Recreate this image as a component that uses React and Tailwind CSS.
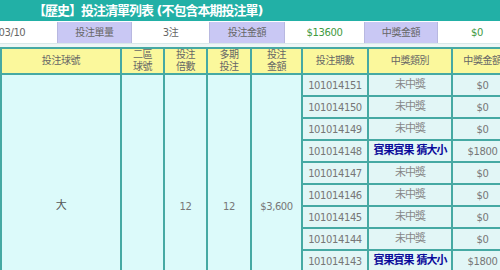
import React from 'react';

const font = { fontFamily: '"DejaVu Sans", "Noto Sans CJK TC", sans-serif' };

const periods = [
  '101014151', '101014150', '101014149', '101014148', '101014147', '101014146',
  '101014145', '101014144', '101014143', '101014142', '101014141', '101014140',
];
const wins = ['101014148', '101014143'];

const cols = [120, 43, 43, 44, 51, 66, 84, 61];

function App() {
  return (
    <div className="w-[500px] h-[270px] overflow-hidden bg-white" style={font}>
      {/* Title */}
      <div className="h-[21px] bg-[#22b0a6] flex items-center pl-[33px]">
        <span className="text-white font-bold text-[13px] tracking-[-1px] leading-none whitespace-nowrap">
          【歷史】投注清單列表 (不包含本期投注單)
        </span>
      </div>

      {/* Summary row */}
      <div className="mt-[1px] h-[22px] flex text-[10px] tracking-[-0.4px] whitespace-nowrap border-b border-[#d8e8e8]">
        <div className="-ml-[60px] w-[117px] shrink-0 bg-white flex items-center justify-center text-[#666]">2012/03/10</div>
        <div className="w-[75px] shrink-0 bg-[#c9c8f4] flex items-center justify-center text-[#666] border-x border-[#b8b8e0]">投注單量</div>
        <div className="w-[77px] shrink-0 bg-white flex items-center justify-center text-[#666]">3注</div>
        <div className="w-[76px] shrink-0 bg-[#c9c8f4] flex items-center justify-center text-[#666] border-x border-[#b8b8e0]">投注金額</div>
        <div className="w-[79px] shrink-0 bg-white flex items-center justify-center text-[#3f9a3f]">$13600</div>
        <div className="w-[74px] shrink-0 bg-[#c9c8f4] flex items-center justify-center text-[#666] border-x border-[#b8b8e0]">中獎金額</div>
        <div className="w-[78px] shrink-0 bg-white flex items-center justify-center text-[#3f9a3f]">$0</div>
      </div>

      <div className="h-[3px] bg-[#eef6f6]" />

      {/* Detail table */}
      <table className="table-fixed border-collapse w-[512px] text-[10px] tracking-[-0.4px]">
        <colgroup>
          {cols.map((w, i) => (
            <col key={i} style={{ width: w }} />
          ))}
        </colgroup>
        <thead>
          <tr className="h-[26px] bg-[#fbf89c] text-[#666] leading-[12px]">
            <th className="font-normal border-2 border-[#46a9a3]">投注球號</th>
            <th className="font-normal border-2 border-[#46a9a3]">二區<br />球號</th>
            <th className="font-normal border-2 border-[#46a9a3]">投注<br />倍數</th>
            <th className="font-normal border-2 border-[#46a9a3]">多期<br />投注</th>
            <th className="font-normal border-2 border-[#46a9a3]">投注<br />金額</th>
            <th className="font-normal border-2 border-[#46a9a3]">投注期數</th>
            <th className="font-normal border-2 border-[#46a9a3]">中獎類別</th>
            <th className="font-normal border-2 border-[#46a9a3] whitespace-nowrap">中獎金額</th>
          </tr>
        </thead>
        <tbody>
          {periods.map((p, i) => {
            const win = wins.includes(p);
            return (
              <tr key={p} className="h-[22px]">
                {i === 0 && (
                  <>
                    <td rowSpan={12} className="bg-[#dcfafa] border-2 border-[#46a9a3] text-center text-[#555] text-[11px]">大</td>
                    <td rowSpan={12} className="bg-[#dcfafa] border-2 border-[#46a9a3]"></td>
                    <td rowSpan={12} className="bg-[#dcfafa] border-2 border-[#46a9a3] text-center text-[#777]">12</td>
                    <td rowSpan={12} className="bg-[#dcfafa] border-2 border-[#46a9a3] text-center text-[#777]">12</td>
                    <td rowSpan={12} className="bg-[#dcfafa] border-2 border-[#46a9a3] text-center text-[#777]">$3,600</td>
                  </>
                )}
                <td className="bg-[#e2f6f6] border-2 border-[#46a9a3] text-center text-[#777]">{p}</td>
                {win ? (
                  <td className="bg-[#e2f6f6] border-2 border-[#46a9a3] text-center text-[#0a0a9a] font-bold text-[11px] tracking-[-1px] whitespace-nowrap">
                    賓果賓果 猜大小
                  </td>
                ) : (
                  <td className="bg-[#e2f6f6] border-2 border-[#46a9a3] text-center text-[#888] text-[11px] tracking-[-1px]">未中獎</td>
                )}
                <td className="bg-[#e2f6f6] border-2 border-[#46a9a3] text-center text-[#777]">
                  {win ? '$1800' : '$0'}
                </td>
              </tr>
            );
          })}
        </tbody>
      </table>
    </div>
  );
}

export default App;
